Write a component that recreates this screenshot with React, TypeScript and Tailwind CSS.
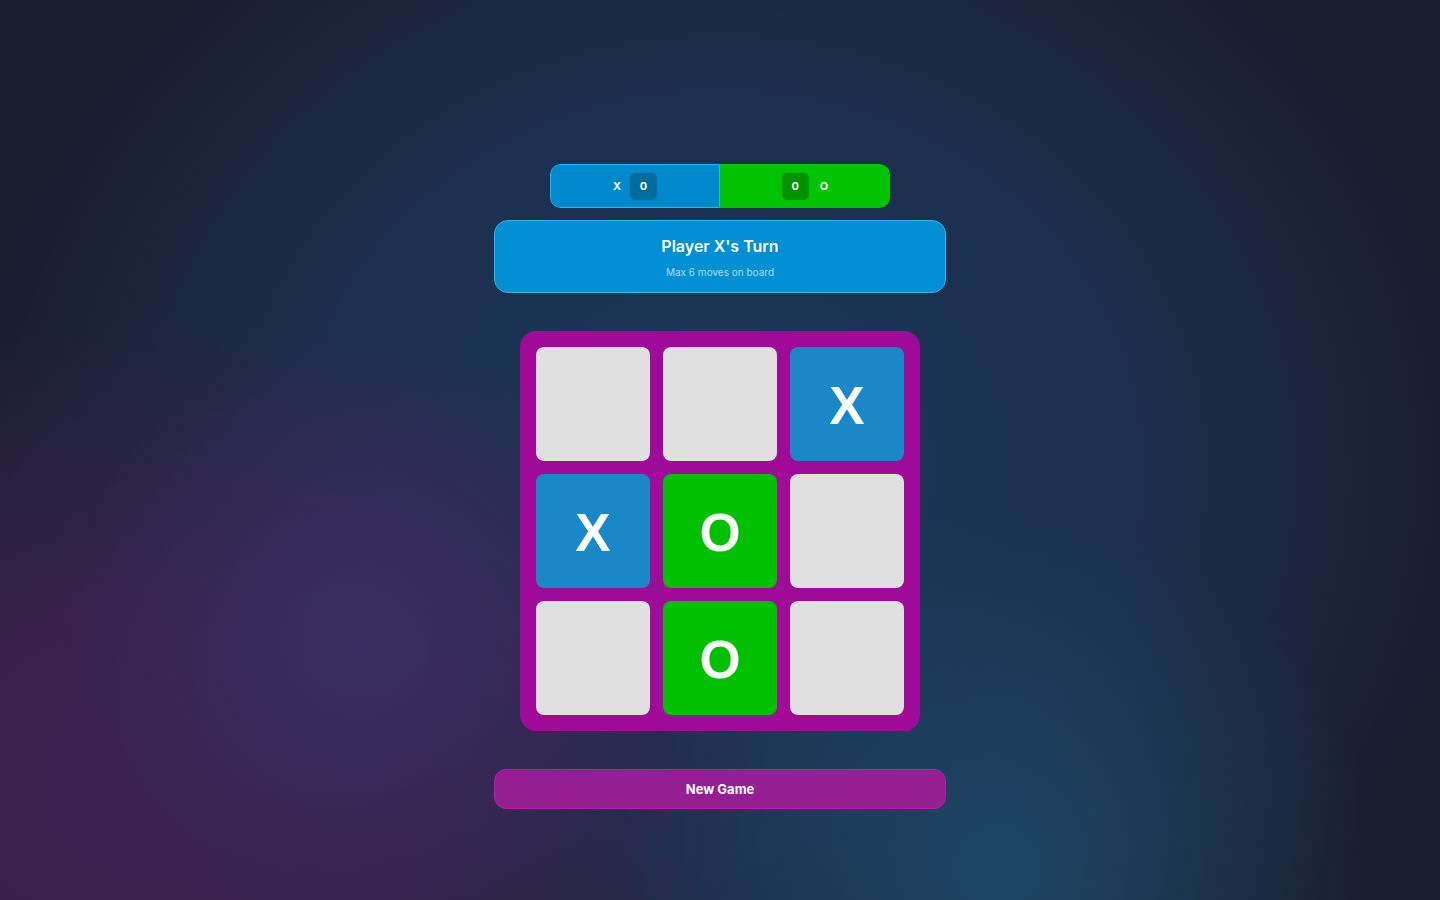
import React, { useState } from 'react';

type Mark = 'X' | 'O' | null;

const initialBoard: Mark[] = [null, null, 'X', 'X', 'O', null, null, 'O', null];

const Cell: React.FC<{ value: Mark; onClick: () => void }> = ({ value, onClick }) => {
  const color =
    value === 'X' ? 'bg-[#1a88c8]' : value === 'O' ? 'bg-[#00c000]' : 'bg-[#e0e0e0]';
  return (
    <button
      onClick={onClick}
      className={`${color} w-[114px] h-[114px] rounded-[8px] flex items-center justify-center text-white text-[53px] font-bold font-['Liberation_Sans',Arial,sans-serif] leading-none pt-[3px]`}
    >
      {value}
    </button>
  );
};

const App: React.FC = () => {
  const [board, setBoard] = useState<Mark[]>(initialBoard);
  const [turn, setTurn] = useState<'X' | 'O'>('X');
  const scores = { X: 0, O: 0 };

  const play = (i: number) => {
    if (board[i]) return;
    const next = [...board];
    next[i] = turn;
    setBoard(next);
    setTurn(turn === 'X' ? 'O' : 'X');
  };

  return (
    <div className="min-h-screen w-full font-['Inter',sans-serif] bg-[#1a1d2c] bg-[radial-gradient(ellipse_380px_360px_at_1000px_870px,#1d4665_0%,transparent_100%),radial-gradient(ellipse_300px_300px_at_360px_640px,#3a2e62_0%,transparent_100%),radial-gradient(ellipse_620px_460px_at_180px_780px,#3a2250_0%,#37214c_40%,transparent_100%),radial-gradient(ellipse_760px_680px_at_720px_470px,#1c3658_0%,#1b2f4e_55%,transparent_100%)]">
      <div className="flex flex-col items-center pt-[164px]">
        {/* score bar */}
        <div className="flex w-[340px] h-[44px] rounded-[10px] overflow-hidden text-white text-[11px] font-bold">
          <div className="w-1/2 flex items-center justify-center gap-[9px] bg-[#0088cc] border border-[#1fb8f0] rounded-l-[10px]">
            <span>X</span>
            <span className="w-[27px] h-[27px] rounded-[5px] bg-[#006c9e] flex items-center justify-center">
              {scores.X}
            </span>
          </div>
          <div className="w-1/2 flex items-center justify-center gap-[11px] bg-[#00c400] rounded-r-[10px]">
            <span className="w-[27px] h-[27px] rounded-[5px] bg-[#009200] flex items-center justify-center">
              {scores.O}
            </span>
            <span>O</span>
          </div>
        </div>

        {/* status */}
        <div className="mt-[12px] w-[452px] h-[73px] rounded-[14px] bg-[#008fd3] border border-[#2ab6ee] flex flex-col items-center justify-center">
          <div className="text-white text-[16px] font-semibold leading-none mt-[2px]">Player {turn}'s Turn</div>
          <div className="text-[#b3def5] text-[10px] leading-none mt-[13px]">Max 6 moves on board</div>
        </div>

        {/* board */}
        <div className="mt-[38px] w-[400px] h-[400px] rounded-[16px] bg-[#a00a98] p-[16px] grid grid-cols-3 gap-[13px]">
          {board.map((v, i) => (
            <Cell key={i} value={v} onClick={() => play(i)} />
          ))}
        </div>

        <button
          onClick={() => {
            setBoard(Array(9).fill(null));
            setTurn('X');
          }}
          className="mt-[38px] w-[452px] h-[40px] rounded-[12px] bg-[#951e90] border border-[#b41cb0] text-white text-[13px] font-bold pt-[2px]"
        >
          New Game
        </button>
      </div>
    </div>
  );
};

export default App;
